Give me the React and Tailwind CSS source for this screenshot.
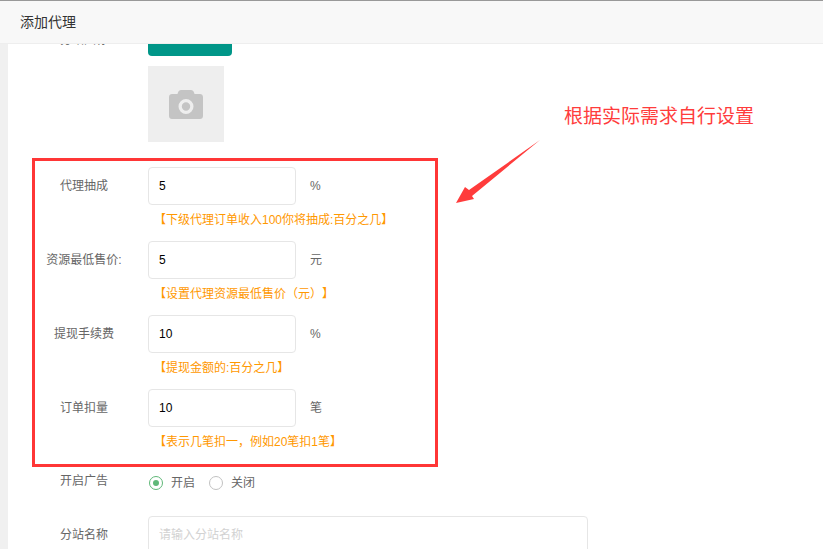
import { useState } from 'react';

const fields = [
  { label: '代理抽成', value: '5', unit: '%', hint: '【下级代理订单收入100你将抽成:百分之几】' },
  { label: '资源最低售价:', value: '5', unit: '元', hint: '【设置代理资源最低售价（元）】' },
  { label: '提现手续费', value: '10', unit: '%', hint: '【提现金额的:百分之几】' },
  { label: '订单扣量', value: '10', unit: '笔', hint: '【表示几笔扣一，例如20笔扣1笔】' },
];

function Label({ children }) {
  return <div className="ml-3 w-[128px] shrink-0 text-center text-xs leading-[38px] text-[#666]">{children}</div>;
}

function Radio({ checked, label, onClick }) {
  return (
    <button type="button" onClick={onClick} className="flex items-center gap-2 text-xs text-[#666]">
      <span className={`flex h-[14px] w-[14px] items-center justify-center rounded-full border ${checked ? 'border-[#5fb878]' : 'border-[#c2c2c2]'}`}>
        {checked && <span className="h-[6px] w-[6px] rounded-full bg-[#5fb878]" />}
      </span>
      {label}
    </button>
  );
}

function CameraIcon() {
  return (
    <svg width="34" height="29" viewBox="0 0 34 29" fill="#c4c4c4">
      <path fillRule="evenodd" d="M9 2.500C9.500 1 10.500 0 12 0h10c1.500 0 2.500 1 3 2.500L25.500 4H31c1.700 0 3 1.300 3 3v19c0 1.700-1.300 3-3 3H3c-1.700 0-3-1.300-3-3V7c0-1.700 1.300-3 3-3h5.500zM17 9a7.500 7.500 0 1 0 0 15 7.500 7.500 0 0 0 0-15zm0 3.300a4.200 4.200 0 1 1 0 8.400 4.200 4.200 0 0 1 0-8.400z" />
    </svg>
  );
}

export default function App() {
  const [ad, setAd] = useState(true);

  return (
    <div className="relative h-[549px] w-[823px] overflow-hidden bg-[#f0f0f0] font-['Liberation_Sans','Noto_Sans_CJK_SC',sans-serif]">
      <div className="h-[44px] border-t border-b border-t-[#999] border-b-[#eee] bg-[#f8f8f8] pl-5 text-sm leading-[42px] text-[#333]">添加代理</div>

      <div className="ml-2 h-[505px] overflow-hidden bg-white">
        <div className="-mt-[26px]">
          <div className="flex">
            <div className="mt-[3px]">
              <Label>分站图标</Label>
            </div>
            <div className="-ml-0">
              <div className="h-[38px] w-[84px] rounded-sm bg-[#009688]" />
              <div className="mt-[10px] flex h-[76px] w-[76px] items-center justify-center bg-[#eee]">
                <CameraIcon />
              </div>
            </div>
          </div>

          <div className="mt-[25px]">
            {fields.map((f) => (
              <div key={f.label} className="h-[74px]">
                <div className="flex">
                  <Label>{f.label}</Label>
                  <input
                    defaultValue={f.value}
                    className="h-[38px] w-[148px] rounded border border-[#e6e6e6] bg-white pl-[10px] text-xs text-black outline-none"
                  />
                  <div className="ml-[14px] text-xs leading-[38px] text-[#666]">{f.unit}</div>
                </div>
                <div className="mt-[6px] ml-[146px] text-xs leading-[18px] text-[#ff9800] [text-spacing-trim:space-all]">{f.hint}</div>
              </div>
            ))}
          </div>

          <div className="-mt-[1px] flex">
            <Label>开启广告</Label>
            <div className="ml-[1px] flex h-[41px] items-center gap-[14px]">
              <Radio checked={ad} label="开启" onClick={() => setAd(true)} />
              <Radio checked={!ad} label="关闭" onClick={() => setAd(false)} />
            </div>
          </div>

          <div className="mt-[13px] flex">
            <Label>分站名称</Label>
            <input
              placeholder="请输入分站名称"
              className="h-[38px] w-[440px] rounded border border-[#e6e6e6] bg-white pl-[10px] text-xs outline-none placeholder:text-[#d2d2d2]"
            />
          </div>
        </div>
      </div>

      {/* annotation drawn over the form */}
      <div className="pointer-events-none absolute left-[32px] top-[158px] h-[309px] w-[406px] border-[3px] border-[#ff3636]" />
      <div className="absolute left-[564px] top-[104px] text-[19px] leading-[26px] text-[#ff3c3c]">根据实际需求自行设置</div>
      <svg className="pointer-events-none absolute left-[450px] top-[135px]" width="95" height="72" viewBox="450 135 95 72" fill="#ff3c3c">
        <polygon points="540,140 469,190 465,187 456,203 474,199 472,196" />
      </svg>
    </div>
  );
}
